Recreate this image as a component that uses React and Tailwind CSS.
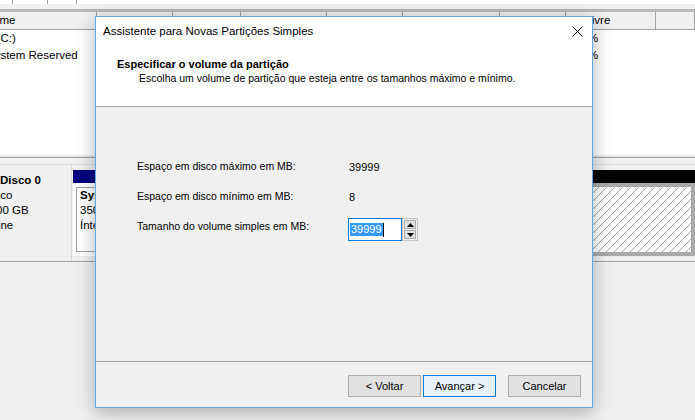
import React from 'react';

const COLUMNS = [
  { label: 'Volume', first: true },
  { label: '' },
  { label: '' },
  { label: '' },
  { label: '' },
  { label: '' },
  { label: '' },
  { label: '% Livre' },
  { label: '' },
];

const WIDTHS = ['w-[97px]', 'w-[76px]', 'w-[68px]', 'w-[86px]', 'w-[76px]', 'w-[97px]', 'w-[66px]', 'w-[90px]', 'w-[39px]'];

// only the cells outside the wizard are filled in
const ROWS = [
  { name: 'Disco Local (C:)', shift: '-ml-[66px]', free: '82 %' },
  { name: 'System Reserved', shift: '-ml-[13px]', free: '69 %' },
];

const Spinner = () => (
  <div className="w-[16px] h-[23px] border border-[#c4c4c4] bg-[#f0f0f0] p-px flex flex-col gap-px">
    <div className="flex-1 border border-[#adadad] bg-[#e1e1e1] flex items-center justify-center">
      <svg width="7" height="4" viewBox="0 0 7 4"><polygon points="3.5,0 7,4 0,4" fill="#000" /></svg>
    </div>
    <div className="flex-1 border border-[#adadad] bg-[#e1e1e1] flex items-center justify-center">
      <svg width="7" height="4" viewBox="0 0 7 4"><polygon points="0,0 7,0 3.5,4" fill="#000" /></svg>
    </div>
  </div>
);

const WizardDialog = () => (
  <div className="absolute left-[95px] top-[16px] w-[498px] h-[392px] border border-[#5fa8e6] bg-[#f0f0f0] flex flex-col shadow-[0_4px_18px_rgba(0,0,0,0.3)] text-black">
    {/* title bar */}
    <div className="h-[29px] bg-white flex items-center justify-between pl-[7px] pr-[9px]">
      <span className="text-[11.5px]">Assistente para Novas Partições Simples</span>
      <svg width="11" height="11" viewBox="0 0 11 11">
        <path d="M0.5 0.5 L10.5 10.5 M10.5 0.5 L0.5 10.5" stroke="#000" strokeWidth="1" />
      </svg>
    </div>

    {/* wizard header */}
    <div className="h-[61px] bg-white border-b border-[#a0a0a0] pt-[11px] leading-[14px]">
      <p className="pl-[21px] font-bold text-[11px]">Especificar o volume da partição</p>
      <p className="pl-[43px] text-[10.5px]">Escolha um volume de partição que esteja entre os tamanhos máximo e mínimo.</p>
    </div>

    {/* body */}
    <div className="h-[254px] pt-[48px] pl-[41px] flex flex-col gap-[6px] text-[10.5px]">
      <div className="flex items-center h-[24px]">
        <span className="w-[212px]">Espaço em disco máximo em MB:</span>
        <span className="text-[11px]">39999</span>
      </div>
      <div className="flex items-center h-[24px]">
        <span className="w-[212px]">Espaço em disco mínimo em MB:</span>
        <span className="text-[11px]">8</span>
      </div>
      <div className="flex items-start h-[30px]">
        <span className="w-[211px] h-[24px] flex items-center">Tamanho do volume simples em MB:</span>
        <div className="flex mt-[3px]">
          <div className="w-[54px] h-[23px] border border-[#0078d7] bg-white flex items-center pl-px">
            <span className="bg-[#3399ff] text-white text-[11px] leading-[13px] px-px">39999</span>
            <span className="w-px h-[14px] bg-black" />
          </div>
          <Spinner />
        </div>
      </div>
    </div>

    {/* footer */}
    <div className="flex-1 border-t border-[#a0a0a0] pt-[13px] pr-[11px] flex justify-end text-[11px]">
      <button className="w-[73px] h-[22px] border border-[#adadad] bg-[#e1e1e1]">&lt; Voltar</button>
      <button className="ml-[2px] w-[73px] h-[22px] border border-[#0078d7] bg-[#e5f1fb]">Avançar &gt;</button>
      <button className="ml-[12px] w-[73px] h-[22px] border border-[#adadad] bg-[#e1e1e1]">Cancelar</button>
    </div>
  </div>
);

const App = () => {
  return (
    <div className="relative w-[695px] h-[420px] overflow-hidden bg-[#f0f0f0] text-black font-['Liberation_Sans',Arial,sans-serif]">
      {/* previous list edge */}
      <div className="h-[4px] bg-white flex">
        <div className="w-[13px] border-r border-[#a0a0a0]" />
        <div className="w-[35px] border-r border-[#a0a0a0]" />
        <div className="w-[29px] border-r border-[#a0a0a0]" />
      </div>
      <div className="h-[5px] bg-[#f0f0f0]" />
      <div className="h-[3px] bg-[#b9b9b9]" />

      {/* column header */}
      <div className="h-[18px] flex bg-[#f0f0f0] border-b border-[#a0a0a0] text-[11.5px]">
        {COLUMNS.map((c, i) => (
          <div key={i} className={`${WIDTHS[i]} shrink-0 border-r border-[#a0a0a0] overflow-hidden whitespace-nowrap flex items-center ${c.first ? '' : 'pl-[6px]'}`}>
            <span className={c.first ? '-ml-[23px]' : ''}>{c.label}</span>
          </div>
        ))}
      </div>

      {/* volume list */}
      <div className="h-[125px] bg-white text-[11.5px]">
        {ROWS.map((r, ri) => (
          <div key={ri} className="h-[17px] flex">
            <div className="w-[97px] shrink-0 overflow-hidden whitespace-nowrap flex items-center">
              <span className={r.shift}>{r.name}</span>
            </div>
            <div className="w-[469px] shrink-0" />
            <div className="w-[90px] shrink-0 flex items-center pl-[6px] whitespace-nowrap">{r.free}</div>
          </div>
        ))}
      </div>

      {/* splitter */}
      <div className="h-[3px] bg-[#e9e9e9] border-b border-[#a0a0a0]" />

      {/* disk pane */}
      <div className="pt-[6px] text-[11.5px]">
        <div className="h-[98px] flex border-b border-[#a0a0a0]">
          <div className="w-[72px] shrink-0 border-t border-r border-[#d8d8d8] bg-[#f0f0f0] pt-[8px] leading-[15px] overflow-hidden whitespace-nowrap">
            <p className="font-bold">Disco 0</p>
            <p className="-ml-[22px]">Básico</p>
            <p className="-ml-[20px]">40,00 GB</p>
            <p className="-ml-[20px]">Online</p>
          </div>

          <div className="ml-px flex-1 flex border-t border-[#dcdcdc]">
            <div className="w-[26px] shrink-0 flex flex-col pt-[5px] pb-[5px]">
              <div className="h-[13px] bg-[#000080]" />
              <div className="flex-1 bg-white pt-[4px] pb-[4px] pl-[3px]">
                <div className="h-full border-l border-t border-b border-[#a0a0a0] bg-white pl-[3px] leading-[15px] overflow-hidden whitespace-nowrap">
                  <p className="font-bold">System Reserved</p>
                  <p>350 MB NTFS</p>
                  <p>Íntegro (Sistema, Ativo, Partição Primária)</p>
                </div>
              </div>
            </div>
            <div className="flex-1 flex flex-col pt-[5px] pb-[5px]">
              <div className="h-[13px] bg-black" />
              <div className="flex-1 bg-[#a9a9a9] p-[4px]">
                <div className="h-full bg-[repeating-linear-gradient(135deg,#ffffff_0px,#ffffff_4.9px,#a6a6a6_4.9px,#a6a6a6_5.66px)]" />
              </div>
            </div>
          </div>
        </div>
      </div>

      <WizardDialog />
    </div>
  );
};

export default App;
